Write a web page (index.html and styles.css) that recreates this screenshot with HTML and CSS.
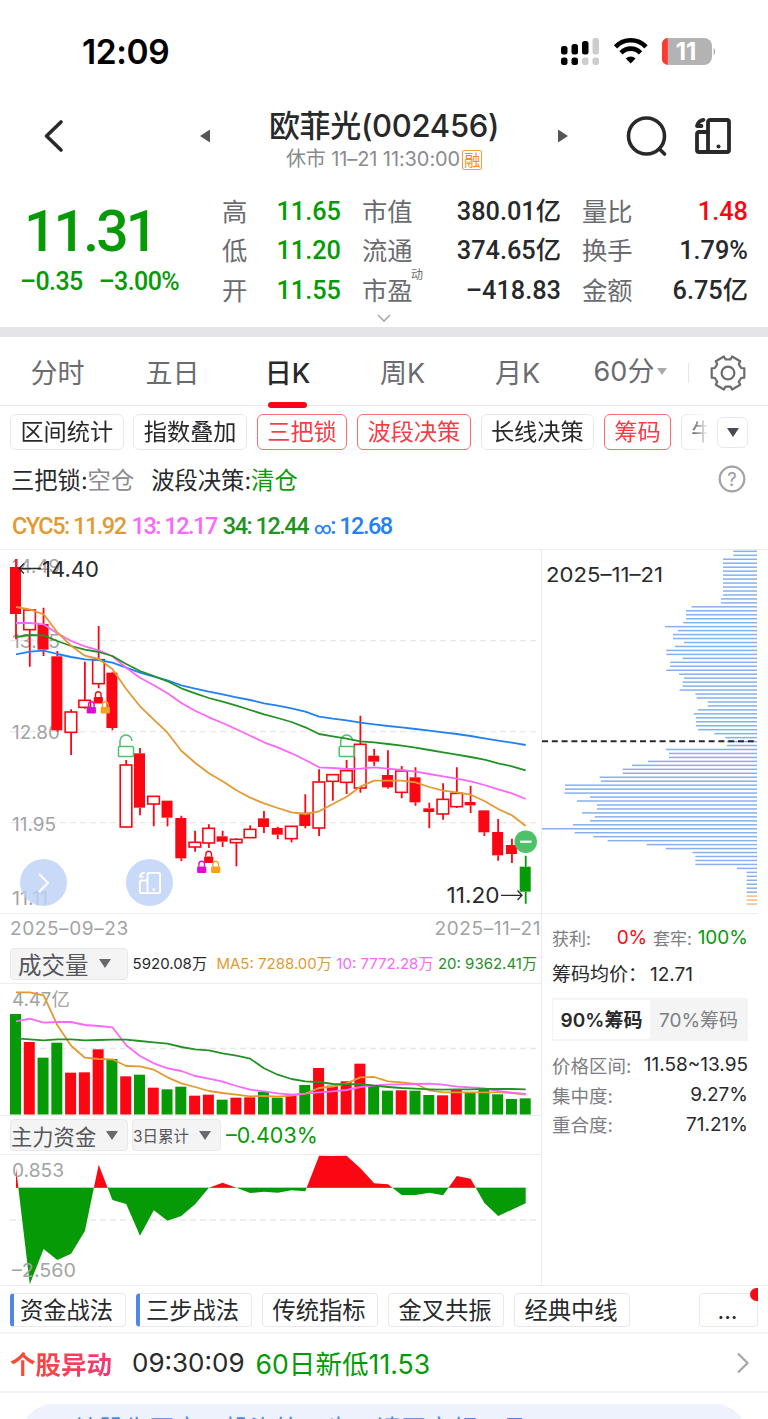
FILE: index.html
```html
<!DOCTYPE html>
<html lang="zh-CN">
<head>
    <meta charset="UTF-8">
    <meta name="viewport" content="width=device-width, initial-scale=1.0">
    <title>欧菲光(002456)</title>
    <link rel="stylesheet" href="styles.css">
</head>
<body>
    <div class="status-bar">
        <span class="clock">12:09</span>
        <svg class="status-icons" width="160" height="30" viewBox="0 0 160 30">
            <g fill="#000">
                <rect x="2" y="9" width="6.5" height="8.5" rx="2.5"/>
                <rect x="12.5" y="7" width="6.5" height="10.5" rx="2.5"/>
                <rect x="23" y="4" width="6.5" height="13.5" rx="2.5"/>
                <rect x="2" y="20.5" width="6.5" height="7.5" rx="2.5"/>
                <rect x="12.5" y="20.5" width="6.5" height="7.5" rx="2.5"/>
            </g>
            <g fill="#cdcdcd">
                <rect x="33.5" y="1" width="6.5" height="16.5" rx="2.5"/>
                <rect x="23" y="20.5" width="6.5" height="7.5" rx="2.5"/>
                <rect x="33.5" y="20.5" width="6.5" height="7.5" rx="2.5"/>
            </g>
            <g fill="none" stroke="#000" stroke-width="4.6">
                <path d="M56.500 9.800 A21 21 0 0 1 87 9.800"/>
                <path d="M62 15.800 A13.500 13.500 0 0 1 81.500 15.800"/>
            </g>
            <path d="M71.700 26.500 L66.800 21.400 A7 7 0 0 1 76.600 21.400 Z" fill="#000"/>
            <rect x="103" y="1" width="50" height="27" rx="8" fill="#b3b3b3"/>
            <path d="M108.800 1 a6 6 0 0 0 -5.800 7 v13 a6 6 0 0 0 5.800 7 z" fill="#ff3b30"/>
            <path d="M154.500 10.500 q3.500 4 0 8 z" fill="#b3b3b3"/>
            <text class="battery-text" x="127" y="23" text-anchor="middle">11</text>
        </svg>
    </div>

    <div class="header">
        <svg class="back" width="24" height="34" viewBox="0 0 24 34"><path d="M19 3 L4.500 17 L19 31" fill="none" stroke="#28292b" stroke-width="3.600" stroke-linecap="round" stroke-linejoin="round"/></svg>
        <svg class="prev" width="12" height="16" viewBox="0 0 12 16"><path d="M11 1.500 V14.500 L1 8 Z" fill="#555"/></svg>
        <div class="title">
            <div class="stock-name">欧菲光(002456)</div>
            <div class="stock-state">休市 11–21 11:30:00<span class="margin-tag">融</span></div>
        </div>
        <svg class="next" width="12" height="16" viewBox="0 0 12 16"><path d="M1 1.500 V14.500 L11 8 Z" fill="#555"/></svg>
        <svg class="search" width="42" height="42" viewBox="0 0 42 42" fill="none" stroke="#28292b" stroke-width="3.600" stroke-linecap="round"><circle cx="20.500" cy="21" r="18"/><path d="M34 34.500 L38.500 39"/></svg>
        <svg class="rotate" width="38" height="38" viewBox="0 0 38 38"><g class="device" stroke="#28292b" stroke-width="3.800"><rect x="14" y="3" width="21" height="32" rx="2"/><path d="M14 15 H5 Q3 15 3 17 V33 Q3 35 5 35 H14"/><path d="M9.500 2.800 Q4.500 3.500 3 9 L7.500 9"/></g><circle cx="24.500" cy="29.500" r="2" fill="#28292b"/></svg>
    </div>

    <div class="quote">
        <div class="price">
            <div class="last">11.31</div>
            <div class="change"><span>–0.35</span><span>–3.00%</span></div>
        </div>
        <div class="stats">
            <span>高</span><b class="down">11.65</b><span class="name">市值</span><b>380.01亿</b><span class="name">量比</span><b class="up">1.48</b>
            <span>低</span><b class="down">11.20</b><span class="name">流通</span><b>374.65亿</b><span class="name">换手</span><b>1.79%</b>
            <span>开</span><b class="down">11.55</b><span class="name">市盈<sup>动</sup></span><b>–418.83</b><span class="name">金额</span><b>6.75亿</b>
        </div>
        <svg class="expand" width="16" height="10" viewBox="0 0 16 10"><path d="M2 2 L8 8 L14 2" fill="none" stroke="#aaa" stroke-width="1.600"/></svg>
    </div>

    <div class="tabs">
        <span>分时</span>
        <span>五日</span>
        <span class="active">日K</span>
        <span>周K</span>
        <span>月K</span>
        <span class="minutes">60分<i class="caret"></i></span>
        <svg class="gear" width="38" height="38" viewBox="-19 -19 38 38" fill="none" stroke="#6b6c6f" stroke-width="2.200" stroke-linejoin="round"><circle r="6.400"/><path d="M16.300 -4.700 V4.700 L13.100 5 L10.800 8.800 L12.200 11.800 L4.100 16.500 L2.600 13.700 H-2.600 L-4.100 16.500 L-12.200 11.800 L-10.800 8.800 L-13.100 5 L-16.300 4.700 V-4.700 L-13.100 -5 L-10.800 -8.800 L-12.200 -11.800 L-4.100 -16.500 L-2.600 -13.700 H2.600 L4.100 -16.500 L12.200 -11.800 L10.800 -8.800 L13.100 -5 Z"/></svg>
    </div>

    <div class="filters">
        <div class="filter-list">
            <span class="tag">区间统计</span>
            <span class="tag">指数叠加</span>
            <span class="tag on">三把锁</span>
            <span class="tag on">波段决策</span>
            <span class="tag">长线决策</span>
            <span class="tag on">筹码</span>
            <span class="tag">牛</span>
        </div>
        <span class="more"><i class="caret"></i></span>
    </div>

    <div class="signals">
        <span>三把锁:<em>空仓</em></span>
        <span>波段决策:<em class="down">清仓</em></span>
        <svg class="help" width="28" height="28" viewBox="0 0 28 28"><circle cx="14" cy="14" r="12.300" fill="none" stroke="#a2a3a5" stroke-width="2.200"/><text x="14" y="20.500" text-anchor="middle">?</text></svg>
    </div>

    <div class="averages">
        <span class="c-orange">CYC5: 11.92</span>
        <span class="c-pink">13: 12.17</span>
        <span class="c-green">34: 12.44</span>
        <span class="c-blue"><i class="infinity">∞</i>: 12.68</span>
    </div>

    <div class="charts">
        <div class="left">
            <div class="price-box">
                <svg id="priceChart" width="541" height="363" viewBox="0 0 541 363"></svg>
                <span class="float-btn float-next"><svg width="16" height="24" viewBox="0 0 16 24"><path d="M3 3 L12 12 L3 21" fill="none" stroke="#fff" stroke-width="2"/></svg></span>
                <span class="float-btn float-rotate"><svg width="24" height="24" viewBox="0 0 38 38"><g class="device" stroke="#fff" stroke-width="3"><rect x="15" y="3" width="20" height="32" rx="2"/><path d="M15 15 H5 Q3 15 3 17 V33 Q3 35 5 35 H15"/><path d="M9.500 2.800 Q4.500 3.500 3 9 L7.500 9"/></g><circle cx="25" cy="29.500" r="2" fill="#fff"/></svg></span>
            </div>
            <div class="dates"><span>2025–09–23</span><span>2025–11–21</span></div>
            <div class="toolbar">
                <span class="select volume-select">成交量<i class="caret"></i></span>
                <span class="vol total">5920.08万</span>
                <span class="vol c-orange">MA5: 7288.00万</span>
                <span class="vol c-pink">10: 7772.28万</span>
                <span class="vol c-green">20: 9362.41万</span>
            </div>
            <svg id="volumeChart" width="541" height="131" viewBox="0 0 541 131"></svg>
            <div class="toolbar flow-toolbar">
                <span class="select">主力资金<i class="caret"></i></span>
                <span class="select period">3日累计<i class="caret"></i></span>
                <span class="flow-value">–0.403%</span>
            </div>
            <svg id="flowChart" width="541" height="130" viewBox="0 0 541 130"></svg>
        </div>

        <div class="right">
            <svg id="chipChart" width="216" height="363" viewBox="0 0 216 363"></svg>
            <div class="holding">
                <div class="line profit"><span>获利:</span><b class="up">0%</b><span>套牢:</span><b class="down">100%</b></div>
                <div class="average">筹码均价：<span>12.71</span></div>
                <div class="switch"><span class="current">90%筹码</span><span>70%筹码</span></div>
                <div class="line"><span>价格区间:</span><b>11.58~13.95</b></div>
                <div class="line"><span>集中度:</span><b>9.27%</b></div>
                <div class="line"><span>重合度:</span><b>71.21%</b></div>
            </div>
        </div>
    </div>

    <div class="strategies">
        <span class="strategy marked">资金战法</span>
        <span class="strategy marked">三步战法</span>
        <span class="strategy">传统指标</span>
        <span class="strategy">金叉共振</span>
        <span class="strategy">经典中线</span>
        <span class="strategy dots">...</span>
    </div>

    <div class="alert">
        <span class="alert-title">个股异动</span>
        <span class="alert-time">09:30:09</span>
        <span class="alert-text">60日新低11.53</span>
        <svg width="14" height="24" viewBox="0 0 14 24"><path d="M2 2.500 L11.500 12 L2 21.500" fill="none" stroke="#a5a6a8" stroke-width="2.200"/></svg>
    </div>

    <div class="banner-wrap">
        <div class="banner">1. 炒股先开户，投资第一步，请开户领工具</div>
    </div>

    <script src="charts.js"></script>
</body>
</html>
```
FILE: styles.css
```css
* {
    box-sizing: border-box;
}
body {
    margin: 0;
    width: 768px;
    height: 1419px;
    overflow: hidden;
    background: #fff;
    color: #28292b;
    font-family: Inter, "Noto Sans CJK SC", sans-serif;
}
svg {
    display: block;
    flex: none;
}
span, b, em, i {
    font-style: normal;
    white-space: nowrap;
}
.up { color: #fa0713 !important; }
.down { color: #079a07 !important; }
.c-orange { color: #e39a32; }
.c-pink { color: #fb67fb; }
.c-green { color: #239226; }
.c-blue { color: #2381f7; }
.caret {
    display: inline-block;
    border: 6px solid transparent;
    border-top: 9px solid #68696c;
    border-bottom: 0;
}

/* status bar */
.status-bar {
    height: 90px;
    padding: 13px 49px 0 82px;
    display: flex;
    justify-content: space-between;
    align-items: center;
}
.clock {
    font-size: 33.500px;
    font-weight: 600;
    letter-spacing: -0.4px;
    color: #000;
}
.battery-text {
    font: 700 24px Inter, sans-serif;
    fill: #fff;
}

/* header */
.header {
    height: 100px;
    display: flex;
    padding-left: 42px;
}
.back { margin-top: 29px; }
.prev { margin: 38px 0 0 133px; }
.title {
    width: 346px;
    text-align: center;
}
.next { margin-top: 38px; }
.search { margin: 25px 0 0 57px; }
.rotate { margin: 27px 0 0 26px; }
.device {
    fill: none;
    stroke-linecap: round;
    stroke-linejoin: round;
}
.stock-name {
    margin-top: 12px;
    line-height: 47px;
    font-size: 31px;
    font-weight: 500;
    letter-spacing: -0.3px;
}
.stock-state {
    display: flex;
    justify-content: center;
    align-items: center;
    line-height: 21px;
    font-size: 20px;
    letter-spacing: -0.1px;
    color: #8a8b8e;
}
.margin-tag {
    width: 20px;
    height: 20px;
    margin-left: 2px;
    border: 1px solid #f79a3c;
    border-radius: 2px;
    font-size: 16px;
    line-height: 18px;
    color: #f78c20;
}

/* quote */
.quote {
    position: relative;
    height: 147px;
    display: flex;
    border-bottom: 10px solid #e5e5e7;
}
.price {
    width: 222px;
    font-family: Roboto, sans-serif;
    font-weight: 500;
    color: #079a07;
}
.last {
    margin: 13px 0 0 24px;
    font-size: 57px;
    line-height: 58px;
    letter-spacing: -2.8px;
}
.change {
    margin: 5px 0 0 20px;
    display: flex;
    gap: 16px;
    font-size: 25px;
    line-height: 32px;
    letter-spacing: -0.6px;
}
.stats {
    width: 526px;
    height: 121px;
    padding-top: 2px;
    display: grid;
    grid-template-columns: 27px 92px 94px 126px 94px 93px;
    grid-template-rows: repeat(3, 39.500px);
    align-items: center;
    font-size: 25.300px;
    line-height: 38px;
    color: #6b6c6f;
}
.stats b {
    font-family: Roboto, "Noto Sans CJK SC", sans-serif;
    font-weight: 500;
    color: #28292b;
    text-align: right;
}
.stats .name {
    position: relative;
    padding-left: 21px;
}
.stats sup {
    position: absolute;
    left: 70px;
    top: -7px;
    font-size: 12px;
    line-height: 20px;
}
.expand {
    position: absolute;
    left: 376px;
    bottom: 4px;
}

/* period tabs */
.tabs {
    height: 69px;
    display: grid;
    grid-template-columns: repeat(5, 115px) 109px 84px;
    align-items: center;
    justify-items: center;
    border-bottom: 1px solid #e9e9eb;
    font-size: 27px;
    color: #6b6c6f;
}
.tabs span {
    height: 68px;
    line-height: 73px;
}
.tabs .active {
    position: relative;
    font-weight: 500;
    color: #28292b;
}
.tabs .active::after {
    content: "";
    position: absolute;
    left: 50%;
    bottom: -3px;
    width: 39px;
    height: 6px;
    margin-left: -20px;
    border-radius: 3px;
    background: #fa0713;
}
.minutes {
    display: flex;
    align-items: center;
    padding-left: 2px;
}
.minutes .caret {
    margin-left: 3px;
    border-width: 7px 5px 0;
    border-top-color: #aaa;
}
.gear {
    margin: 3px 0 0 25px;
    justify-self: start;
}
.tabs .minutes { position: relative; }
.tabs .minutes::after {
    content: "";
    position: absolute;
    right: -22px;
    top: 26px;
    height: 20px;
    border-right: 1px solid #e5e5e7;
}

/* filter tags */
.filters {
    height: 52px;
    padding: 0 20px 0 10px;
    display: flex;
    align-items: center;
}
.filter-list {
    width: 697px;
    display: flex;
    gap: 9.900px;
    overflow: hidden;
    -webkit-mask-image: linear-gradient(90deg, #000 677px, transparent 698px);
    mask-image: linear-gradient(90deg, #000 677px, transparent 698px);
}
.tag {
    height: 36px;
    padding: 0 9.400px;
    border: 1px solid #e7e8ea;
    border-radius: 6px;
    font-size: 23.200px;
    line-height: 34px;
}
.tag.on {
    border-color: #fb6b72;
    color: #fb3a44;
}
.more {
    width: 31px;
    height: 31px;
    margin-left: 10px;
    display: flex;
    align-items: center;
    justify-content: center;
    border: 1px solid #e7e8ea;
    border-radius: 6px;
}
.more .caret { border-top-color: #4b4c52; }

/* signals */
.signals {
    height: 42px;
    padding: 0 22px 0 11px;
    display: flex;
    gap: 17px;
    align-items: center;
    font-size: 23.300px;
}
.signals em { color: #8a8b8e; }
.help { margin-left: auto; }
.help text {
    font: 500 18px Inter, sans-serif;
    fill: #a2a3a5;
}
.averages {
    height: 49px;
    padding: 0 12px;
    display: flex;
    gap: 6px;
    line-height: 53px;
    font-family: Roboto, "DejaVu Sans", sans-serif;
    font-size: 23.500px;
    font-weight: 500;
    letter-spacing: -1.5px;
}
.infinity { font-size: 17px; }

/* charts */
.charts {
    height: 737px;
    display: flex;
    border-top: 1px solid #ececee;
    border-bottom: 1px solid #ececee;
}
.left {
    width: 542px;
    border-right: 1px solid #ececee;
}
.price-box {
    position: relative;
    height: 364px;
    border-bottom: 1px solid #ececee;
}
.float-btn {
    position: absolute;
    top: 309px;
    width: 47px;
    height: 47px;
    display: flex;
    align-items: center;
    justify-content: center;
    border-radius: 50%;
    background: rgba(188, 209, 246, 0.8);
}
.float-next { left: 20px; }
.float-rotate { left: 126px; }
.charts text {
    font-family: Inter, "Noto Sans CJK SC", sans-serif;
    font-size: 18.500px;
    fill: #a2a3a5;
}
.charts text.mark {
    font-size: 22px;
    fill: #28292b;
}
.charts text.chip-date {
    font-size: 20px;
    fill: #28292b;
}
.dates {
    height: 30px;
    padding-left: 10px;
    display: flex;
    justify-content: space-between;
    line-height: 29px;
    font-size: 19px;
    letter-spacing: 0.6px;
    color: #a2a3a5;
}
.toolbar {
    height: 40px;
    padding: 0 4px 0 10px;
    display: flex;
    align-items: center;
    justify-content: space-between;
    border-bottom: 1px solid #ececee;
}
.select {
    width: 118px;
    height: 32px;
    display: flex;
    align-items: center;
    justify-content: space-between;
    padding: 0 9px 0 0;
    border: 1px solid #e9e9eb;
    border-radius: 4px;
    background: #f4f4f5;
    font-size: 21.300px;
    color: #56575a;
}
.volume-select {
    padding: 0 16px 0 7px;
    font-size: 23.500px;
}
.vol {
    margin-top: -2px;
    font-size: 15px;
}
.total { margin-right: 5px; }
.flow-toolbar {
    justify-content: flex-start;
    border-top: 1px solid #ececee;
}
.period {
    width: 89px;
    margin-left: 4px;
    font-size: 15.500px;
}
.flow-value {
    margin-left: 5px;
    font-size: 21.500px;
    color: #079a07;
}

/* cost distribution */
.right { width: 226px; }
.holding {
    width: 216px;
    padding: 7px 10px 0;
    border-top: 1px solid #ececee;
    font-size: 19px;
}
.line {
    height: 29.700px;
    display: flex;
    justify-content: space-between;
    align-items: center;
    font-size: 18.500px;
    color: #7d7e81;
}
.line b {
    font-weight: 400;
    font-size: 19px;
    color: #28292b;
}
.profit {
    height: 32px;
    font-size: 17px;
}
.profit b:first-of-type { margin-left: 20px; }
.average {
    height: 45px;
    line-height: 44px;
}
.average span { margin-left: 3px; }
.switch {
    height: 43px;
    margin-bottom: 9px;
    display: flex;
    padding: 2px 1px;
    background: #f4f4f5;
    line-height: 41px;
    color: #7d7e81;
}
.switch span {
    width: 98px;
    text-align: center;
}
.switch .current {
    background: #fff;
    font-weight: 600;
    color: #28292b;
}

/* bottom */
.strategies {
    height: 48px;
    padding: 1px 10px 0;
    display: flex;
    gap: 10px;
    align-items: center;
    border-bottom: 2px solid #f2f2f4;
}
.strategy {
    width: 116px;
    height: 34px;
    padding-right: 2px;
    border: 1px solid #e9e9eb;
    border-radius: 4px;
    text-align: center;
    font-size: 23.300px;
    line-height: 34px;
}
.marked {
    padding-right: 6px;
    border-left: 4px solid #4e87e8;
}
.dots {
    position: relative;
    width: 59px;
    margin-left: auto;
}
.dots::after {
    content: "";
    position: absolute;
    right: -1px;
    top: -6px;
    width: 8px;
    height: 13px;
    border-radius: 7px 0 0 7px;
    background: #fa0713;
}
.alert {
    height: 59px;
    padding: 0 18px 0 10px;
    display: flex;
    align-items: center;
    border-bottom: 2px solid #f2f2f4;
    font-size: 26px;
}
.alert svg { margin-left: auto; }
.alert-title {
    font-size: 25.500px;
    font-weight: 700;
    background: linear-gradient(90deg, #fb4a2c, #ee3a78);
    -webkit-background-clip: text;
    background-clip: text;
    color: transparent;
}
.alert-time { margin-left: 20px; }
.alert-text {
    margin-left: 11px;
    font-size: 26.600px;
    color: #079a07;
}
.banner-wrap { padding: 11px 21px 0; }
.banner {
    height: 64px;
    padding-left: 28px;
    border-radius: 32px;
    background: #edf2fc;
    font-size: 25.200px;
    line-height: 51px;
    color: #4e87e8;
}
```
FILE: charts.js
```js
const RED = '#fa0713';
const GREEN = '#079a07';
const ORANGE = '#e39a32';
const PINK = '#fb67fb';
const BLUE = '#2381f7';

const xAt = i => 16 + i * 13.776;

// high, top, bottom, low, hollow body
const candles = [
    [42, 66, 207, 283, 0], [192, 195, 254, 365, 1], [188, 237, 314, 333, 0], [318, 334, 556, 560, 0],
    [493, 501, 562, 630, 1], [350, 466, 487, 491, 1], [243, 344, 416, 430, 1], [380, 383, 549, 556, 0],
    [645, 660, 846, 846, 1], [609, 625, 788, 811, 0], [753, 754, 777, 844, 1], [767, 767, 818, 844, 0],
    [812, 819, 940, 948, 0], [857, 892, 906, 920, 1], [838, 850, 894, 909, 1], [857, 874, 890, 906, 0],
    [880, 883, 893, 964, 1], [841, 853, 878, 878, 1], [798, 820, 846, 864, 0], [845, 849, 869, 883, 0],
    [844, 844, 881, 892, 1], [748, 803, 843, 850, 0], [673, 711, 849, 873, 1], [689, 689, 709, 767, 1],
    [645, 677, 712, 747, 1], [512, 598, 729, 743, 1], [612, 632, 650, 662, 0], [616, 690, 727, 731, 0],
    [663, 678, 742, 760, 1], [667, 697, 772, 782, 0], [773, 790, 801, 850, 0], [715, 763, 807, 824, 1],
    [667, 745, 785, 789, 1], [722, 771, 781, 804, 0], [796, 796, 862, 873, 0], [822, 861, 931, 947, 0],
    [881, 900, 927, 954, 0], [932, 965, 1040, 1076, 0]
];

const priceLines = [
    [BLUE, [328, 320, 317, 327, 336, 343, 345, 353, 368, 383, 395, 406, 421, 431, 440, 448, 457, 465, 475, 482, 490, 500, 515, 521, 526, 533, 538, 543, 547, 552, 557, 562, 567, 573, 580, 587, 593, 600]],
    [PINK, [234, 234, 238, 265, 288, 304, 316, 334, 368, 398, 421, 445, 474, 497, 517, 534, 553, 572, 592, 607, 625, 645, 667, 669, 672, 671, 667, 671, 675, 680, 687, 694, 701, 709, 720, 733, 745, 762]],
    ['#239226', [276, 270, 271, 288, 303, 314, 321, 333, 357, 378, 393, 409, 430, 445, 459, 470, 482, 495, 508, 519, 531, 547, 567, 574, 581, 589, 592, 597, 602, 608, 615, 622, 629, 636, 644, 655, 664, 676]],
    [ORANGE, [186, 193, 208, 262, 302, 332, 342, 372, 432, 484, 524, 563, 617, 653, 685, 709, 736, 758, 775, 789, 802, 807, 799, 777, 755, 725, 707, 707, 707, 712, 726, 737, 742, 749, 768, 792, 811, 843]]
];

const volumes = [312, 396, 443, 398, 488, 487, 418, 447, 499, 494, 533, 538, 530, 557, 554, 569, 563, 562, 545, 563, 558, 525, 474, 527, 514, 461, 528, 542, 541, 542, 555, 556, 538, 547, 537, 553, 567, 565];
const volumeColors = 'grggrrrgrgrggrrgrrggrgrrrrggrggrrggggg';

const volumeLines = [
    [ORANGE, [247, 247, 256, 345, 407, 443, 447, 448, 468, 469, 479, 502, 520, 531, 543, 549, 554, 559, 558, 560, 557, 551, 534, 530, 520, 502, 501, 514, 517, 522, 541, 547, 547, 547, 547, 547, 549, 554]],
    [PINK, [334, 326, 338, 336, 336, 345, 348, 352, 406, 438, 460, 475, 483, 498, 506, 515, 528, 539, 544, 550, 554, 551, 547, 544, 540, 531, 526, 524, 523, 522, 521, 524, 530, 532, 535, 543, 548, 552]],
    ['#239226', [385, 388, 391, 388, 388, 391, 390, 389, 389, 393, 397, 401, 411, 418, 421, 430, 437, 446, 475, 494, 507, 514, 516, 522, 523, 522, 527, 531, 534, 536, 538, 539, 538, 538, 537, 537, 537, 538]]
];

const flow = [774, 1123, 1017, 1050, 1031, 963, 764, 870, 882, 977, 901, 932, 918, 883, 833, 818, 833, 849, 845, 848, 841, 844, 737, 738, 737, 775, 820, 823, 855, 855, 848, 856, 798, 806, 879, 918, 899, 880];

const chips = [
    580, 580, 549, 549, 549, 549, 549, 549, 549, 549, 549, 549, 543, 543, 455, 438, 438, 438, 430, 375,
    414, 399, 399, 432, 405, 379, 379, 428, 390, 390, 379, 417, 432, 428, 428, 419, 466, 470, 503, 503,
    474, 461, 468, 468, 468, 474, 523, 556, 560, 561, 378, 387, 387, 324, 276, 248, 248, 179, 183, 75,
    75, 73, 150, 111, 171, 171, 126, 164, 150, 99, 6, 104, 160, 203, 320, 377, 457, 466, 466, 466,
    591, 620, 620, 620, 620, 620, 620, 620, 620, 620
];

function grid(y) {
    return `<path d="M10 ${y} H538" stroke="#e8e8ea" stroke-width="1.300" stroke-dasharray="6 4"/>`;
}

function label(x, y, width, text, cls = '') {
    return `<text class="${cls}" x="${x}" y="${y}" textLength="${width}" lengthAdjust="spacingAndGlyphs">${text}</text>`;
}

function polyline(values, color, offset) {
    const points = values.map((v, i) => `${xAt(i).toFixed(1)},${(v / 3 - offset).toFixed(1)}`).join(' ');
    return `<polyline points="${points}" fill="none" stroke="${color}" stroke-width="1.800" stroke-linejoin="round"/>`;
}

function lock(x, y, color) {
    return `<g transform="translate(${x} ${y})"><rect x="-4.600" y="0" width="9.200" height="6.500" rx="1" fill="${color}"/>
        <path d="M-2.800 0 V-2.500 A2.800 2.800 0 0 1 2.800 -2.500 V0" fill="none" stroke="${color}" stroke-width="1.400"/></g>`;
}

function threeLocks(x, y) {
    return lock(x, y, RED) + lock(x - 7, y + 10, '#df0bd0') + lock(x + 7, y + 10, '#f6a21f');
}

function openLock(x, y) {
    return `<g transform="translate(${x} ${y})" fill="none" stroke="#4cc168" stroke-width="1.500"><rect x="-7.500" y="0" width="15" height="10" rx="1"/>
        <path d="M-6 0 V-5.500 A6 6 0 0 1 6 -5.500"/></g>`;
}

function drawPrice() {
    let s = grid(90.7) + grid(181.7) + grid(272.7);
    s += label(12, 22.5, 48, '14.49') + label(12, 98, 48, '13.65') + label(12, 189.300, 48, '12.80') + label(12, 280.500, 44, '11.95') + label(12, 355, 36, '11.11');
    candles.forEach(([high, top, bottom, low, hollow], i) => {
        const x = xAt(i);
        const [h, t, b, l] = [high, top, bottom, low].map(v => v / 3 - 5);
        const color = i === candles.length - 1 ? GREEN : RED;
        s += `<path d="M${x} ${h} V${t} M${x} ${b} V${l}" stroke="${color}" stroke-width="1.800"/>`;
        if (hollow) {
            s += `<rect x="${x - 6}" y="${t}" width="11.600" height="${b - t}" fill="#fff" stroke="${color}" stroke-width="1.600"/>`;
        } else {
            s += `<rect x="${x - 6}" y="${t}" width="11" height="${b - t}" fill="${color}"/>`;
        }
    });
    s += openLock(126, 196.500) + openLock(346.700, 196.500);
    priceLines.forEach(([color, values]) => s += polyline(values, color, 5));
    s += threeLocks(98.300, 147) + threeLocks(208.700, 306.500);
    s += `<circle cx="525.700" cy="291.700" r="11.300" fill="#4cc168"/><path d="M520 291.700 H531.500" stroke="#fff" stroke-width="2.200"/>`;
    s += `<path d="M41 18.500 H19 M24 13.500 L19 18.500 L24 23.500" fill="none" stroke="#28292b" stroke-width="1.300"/>`;
    s += `<path d="M501 345.300 H522 M517.500 340.500 L522 345.300 L517.500 350" fill="none" stroke="#28292b" stroke-width="1.300"/>`;
    s += label(42, 26.700, 57, '14.40', 'mark') + label(446.500, 353.300, 53, '11.20', 'mark');
    document.getElementById('priceChart').innerHTML = s;
}

function drawVolume() {
    let s = grid(64.5) + label(12, 21.500, 58, '4.47亿');
    volumes.forEach((v, i) => {
        const y = v / 3 - 74;
        s += `<rect x="${xAt(i) - 6}" y="${y}" width="11" height="${130.500 - y}" fill="${volumeColors[i] === 'r' ? RED : GREEN}"/>`;
    });
    volumeLines.forEach(([color, values]) => s += polyline(values, color, 74));
    document.getElementById('volumeChart').innerHTML = s;
}

function drawFlow() {
    const zero = 32.7;
    const points = flow.map((v, i) => `${xAt(i).toFixed(1)},${(v / 3 - 245).toFixed(1)}`).join(' ');
    const shape = `${xAt(0)},${zero} ${points} ${xAt(flow.length - 1)},${zero}`;
    document.getElementById('flowChart').innerHTML = `
        <clipPath id="above"><rect width="541" height="${zero + 0.3}"/></clipPath>
        <clipPath id="below"><rect y="${zero - 0.3}" width="541" height="100"/></clipPath>
        ${grid(65)}
        <polygon points="${shape}" fill="${GREEN}" clip-path="url(#below)"/>
        <polygon points="${shape}" fill="${RED}" clip-path="url(#above)"/>
        ${label(12, 22, 52, '0.853')}${label(12, 122, 64, '–2.560')}`;
}

function drawChips() {
    let s = '';
    chips.forEach((left, i) => {
        const x = left / 3 - 2;
        const y = 1.3 + i * 3.963;
        s += `<rect x="${x}" y="${y - 0.700}" width="${215 - x}" height="1.500" fill="${i > 86 ? '#fbb981' : '#86b0ee'}"/>`;
    });
    s += '<path d="M0 191.300 H214" stroke="#28292b" stroke-width="2" stroke-dasharray="6 3.800"/>';
    s += label(4, 32, 117, '2025–11–21', 'chip-date');
    document.getElementById('chipChart').innerHTML = s;
}

drawPrice();
drawVolume();
drawFlow();
drawChips();
```
